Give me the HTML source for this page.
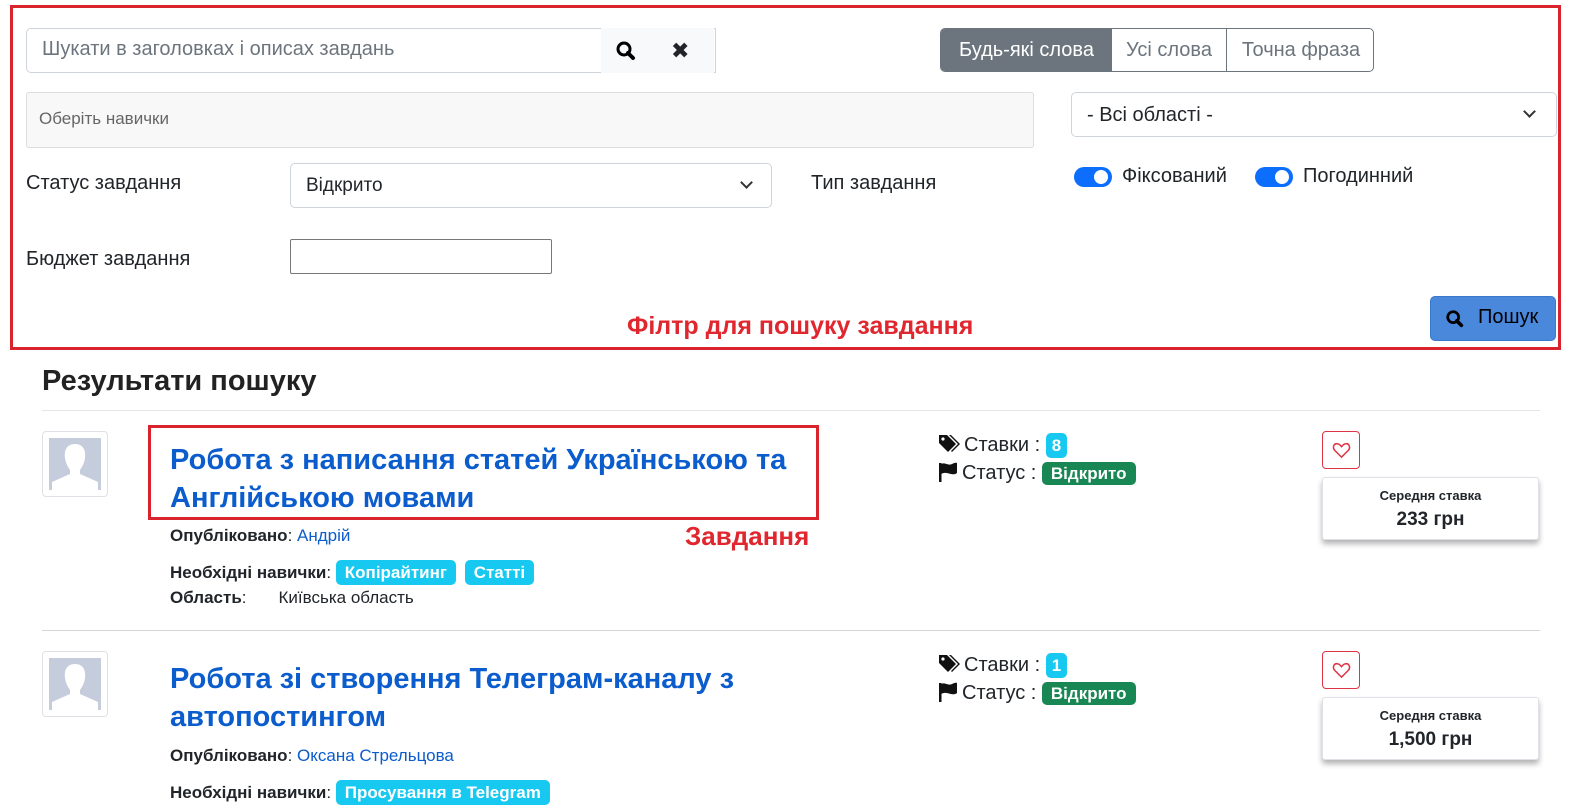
<!DOCTYPE html>
<html><head><meta charset="utf-8"><style>
*{box-sizing:border-box;margin:0;padding:0}
body{width:1569px;height:801px;overflow:hidden;background:#fff;font-family:"Liberation Sans","DejaVu Sans",sans-serif;color:#212529;position:relative}
.a{position:absolute}
.frame{left:10px;top:5px;width:1551px;height:345px;border:3px solid #d9232d}
.inp{border:1px solid #ced4da;border-radius:5px;background:#fff}
.lbl{font-size:20px}
.sw{width:38px;height:20px;border-radius:10px;background:#0d6efd}
.sw:after{content:"";position:absolute;right:4px;top:3px;width:14px;height:14px;border-radius:50%;background:#fff}
.chev{width:9px;height:9px;border-right:2px solid #333;border-bottom:2px solid #333;transform:rotate(45deg)}
.title{font-size:29px;font-weight:bold;color:#0b5ccc;line-height:38px}
.b{font-weight:bold;font-size:17px}
.tag{display:inline-block;background:#17c8f0;color:#fff;font-weight:bold;font-size:17px;border-radius:5px;padding:2px 9px;line-height:21px}
.grn{background:#198754;color:#fff;font-weight:bold;font-size:17px;border-radius:5px;padding:2px 9px;line-height:21px}
.av{width:66px;height:66px;border:1px solid #dee2e6;border-radius:4px;background:#fff}
.av div{position:absolute;left:6px;top:6px;width:52px;height:52px;background:#c5ccdc;overflow:hidden}
.heart{width:38px;height:38px;border:1px solid #dc3545;border-radius:4px}
.card{width:217px;height:63px;border:1px solid #dee2e6;border-radius:3px;box-shadow:0 4px 6px rgba(0,0,0,.3);text-align:center;background:#fff}
.card .s{font-size:13px;font-weight:bold;margin-top:10px}
.card .v{font-size:19px;font-weight:bold;margin-top:6px}
.ic{display:inline-block;vertical-align:-3px;margin-right:4px}
</style></head><body>
<div class="a frame"></div>

<div class="a inp" style="left:26px;top:28px;width:690px;height:45px;border-radius:5px 0 0 5px"></div>
<div class="a" style="left:601px;top:28px;width:113px;height:45px;background:#f8f9fa"></div>
<div class="a" style="left:42px;top:38px;font-size:20px;color:#6c757d">Шукати в заголовках і описах завдань</div>
<svg class="a" style="left:615px;top:40px" width="22" height="22" viewBox="0 0 22 22"><circle cx="9" cy="9" r="6" fill="none" stroke="#000" stroke-width="3"/><path d="M13 13l5 5" stroke="#000" stroke-width="4" stroke-linecap="round"/></svg>
<div class="a" style="left:671px;top:38px;font-size:22px;font-weight:bold">✖</div>

<div class="a" style="left:940px;top:28px;width:434px;height:44px;border:1px solid #6c757d;border-radius:5px;overflow:hidden;font-size:20px">
 <div class="a" style="left:0;top:0;width:171px;height:44px;background:#6c757d;color:#fff;text-align:center;line-height:42px">Будь-які слова</div>
 <div class="a" style="left:171px;top:0;width:115px;height:44px;border-right:1px solid #6c757d;color:#6c757d;text-align:center;line-height:42px">Усі слова</div>
 <div class="a" style="left:286px;top:0;width:148px;height:44px;color:#6c757d;text-align:center;line-height:42px">Точна фраза</div>
</div>

<div class="a" style="left:26px;top:92px;width:1008px;height:56px;background:#f8f8f8;border:1px solid #ddd;border-radius:3px"></div>
<div class="a" style="left:39px;top:109px;font-size:17px;color:#666">Оберіть навички</div>

<div class="a inp" style="left:1071px;top:92px;width:486px;height:45px"></div>
<div class="a" style="left:1087px;top:104px;font-size:20px">- Всі області -</div>
<div class="a chev" style="left:1525px;top:107px"></div>

<div class="a lbl" style="left:26px;top:172px">Статус завдання</div>
<div class="a inp" style="left:290px;top:163px;width:482px;height:45px"></div>
<div class="a" style="left:306px;top:175px;font-size:19px">Відкрито</div>
<div class="a chev" style="left:742px;top:178px"></div>
<div class="a lbl" style="left:811px;top:172px">Тип завдання</div>
<div class="a sw" style="left:1074px;top:167px"></div>
<div class="a lbl" style="left:1122px;top:165px">Фіксований</div>
<div class="a sw" style="left:1255px;top:167px"></div>
<div class="a lbl" style="left:1303px;top:165px">Погодинний</div>

<div class="a lbl" style="left:26px;top:248px">Бюджет завдання</div>
<div class="a" style="left:290px;top:239px;width:262px;height:35px;border:1px solid #777;border-radius:2px"></div>

<div class="a" style="left:627px;top:312px;font-size:25px;font-weight:bold;color:#e0262e">Філтр для пошуку завдання</div>
<div class="a" style="left:1430px;top:296px;width:126px;height:45px;background:#4a88dc;border:1px solid #3a78cc;border-radius:5px"></div>
<svg class="a" style="left:1445px;top:309px" width="20" height="20" viewBox="0 0 22 22"><circle cx="9" cy="9" r="6" fill="none" stroke="#000" stroke-width="3"/><path d="M13 13l5 5" stroke="#000" stroke-width="4" stroke-linecap="round"/></svg>
<div class="a" style="left:1478px;top:306px;font-size:20px;color:#000">Пошук</div>

<div class="a" style="left:42px;top:365px;font-size:29px;font-weight:bold;color:#222">Результати пошуку</div>
<div class="a" style="left:42px;top:410px;width:1498px;height:1px;background:#e5e5e5"></div>

<!-- item 1 -->
<div class="a av" style="left:42px;top:431px"><div><svg width="52" height="52" viewBox="0 0 52 52"><path d="M26 6c-8 0-11 6-10 14 1 7 4 10 5 12v4L3 44v8h46v-8l-18-8v-4c1-2 4-5 5-12 1-8-2-14-10-14z" fill="#fff"/></svg></div></div>
<div class="a" style="left:148px;top:425px;width:671px;height:95px;border:3px solid #d9232d"></div>
<div class="a title" style="left:170px;top:441px">Робота з написання статей Українською та<br>Англійською мовами</div>
<div class="a" style="left:685px;top:521px;font-size:26px;font-weight:bold;color:#e0262e">Завдання</div>
<div class="a" style="left:170px;top:526px;font-size:17px"><span class="b">Опубліковано</span>: <span style="color:#0b5ccc">Андрій</span></div>
<div class="a" style="left:170px;top:560px;font-size:17px"><span class="b">Необхідні навички</span>: <span class="tag">Копірайтинг</span> <span class="tag" style="margin-left:4px">Статті</span></div>
<div class="a" style="left:170px;top:588px;font-size:17px"><span class="b">Область</span>:<span style="margin-left:32px">Київська область</span></div>
<div class="a" style="left:938px;top:433px;font-size:20px"><svg class="ic" width="22" height="20" viewBox="0 0 22 20"><path d="M1 1h8l9 9-8 8-9-9z" fill="#111"/><path d="M11 1h2l9 9-8 8-1-1 7-7z" fill="#111"/><circle cx="5" cy="5" r="1.6" fill="#fff"/></svg>Ставки : <span class="tag" style="padding:2px 6px">8</span></div>
<div class="a" style="left:938px;top:462px;font-size:20px"><svg class="ic" width="20" height="20" viewBox="0 0 20 20"><rect x="1" y="1" width="2.5" height="19" fill="#111"/><path d="M3 2c4-2 7 2 11 0s5-1 5-1v10s-2 2-6 1-6-2-10 0z" fill="#111"/></svg>Статус : <span class="grn">Відкрито</span></div>
<div class="a heart" style="left:1322px;top:431px"><svg class="a" style="left:9px;top:9px" width="19" height="19" viewBox="0 0 20 20"><path d="M10 17L3 10C0 7 2 2 6 3c2 0 3 2 4 3 1-1 2-3 4-3 4-1 6 4 3 7z" fill="none" stroke="#dc3545" stroke-width="1.6"/></svg></div>
<div class="a card" style="left:1322px;top:477px"><div class="s">Середня ставка</div><div class="v">233 грн</div></div>

<div class="a" style="left:42px;top:630px;width:1498px;height:1px;background:#d5d5d5"></div>

<!-- item 2 -->
<div class="a av" style="left:42px;top:651px"><div><svg width="52" height="52" viewBox="0 0 52 52"><path d="M26 6c-8 0-11 6-10 14 1 7 4 10 5 12v4L3 44v8h46v-8l-18-8v-4c1-2 4-5 5-12 1-8-2-14-10-14z" fill="#fff"/></svg></div></div>
<div class="a title" style="left:170px;top:660px">Робота зі створення Телеграм-каналу з<br>автопостингом</div>
<div class="a" style="left:170px;top:746px;font-size:17px"><span class="b">Опубліковано</span>: <span style="color:#0b5ccc">Оксана Стрельцова</span></div>
<div class="a" style="left:170px;top:780px;font-size:17px"><span class="b">Необхідні навички</span>: <span class="tag">Просування в Telegram</span></div>
<div class="a" style="left:938px;top:653px;font-size:20px"><svg class="ic" width="22" height="20" viewBox="0 0 22 20"><path d="M1 1h8l9 9-8 8-9-9z" fill="#111"/><path d="M11 1h2l9 9-8 8-1-1 7-7z" fill="#111"/><circle cx="5" cy="5" r="1.6" fill="#fff"/></svg>Ставки : <span class="tag" style="padding:2px 6px">1</span></div>
<div class="a" style="left:938px;top:682px;font-size:20px"><svg class="ic" width="20" height="20" viewBox="0 0 20 20"><rect x="1" y="1" width="2.5" height="19" fill="#111"/><path d="M3 2c4-2 7 2 11 0s5-1 5-1v10s-2 2-6 1-6-2-10 0z" fill="#111"/></svg>Статус : <span class="grn">Відкрито</span></div>
<div class="a heart" style="left:1322px;top:651px"><svg class="a" style="left:9px;top:9px" width="19" height="19" viewBox="0 0 20 20"><path d="M10 17L3 10C0 7 2 2 6 3c2 0 3 2 4 3 1-1 2-3 4-3 4-1 6 4 3 7z" fill="none" stroke="#dc3545" stroke-width="1.6"/></svg></div>
<div class="a card" style="left:1322px;top:697px"><div class="s">Середня ставка</div><div class="v">1,500 грн</div></div>
</body></html>
